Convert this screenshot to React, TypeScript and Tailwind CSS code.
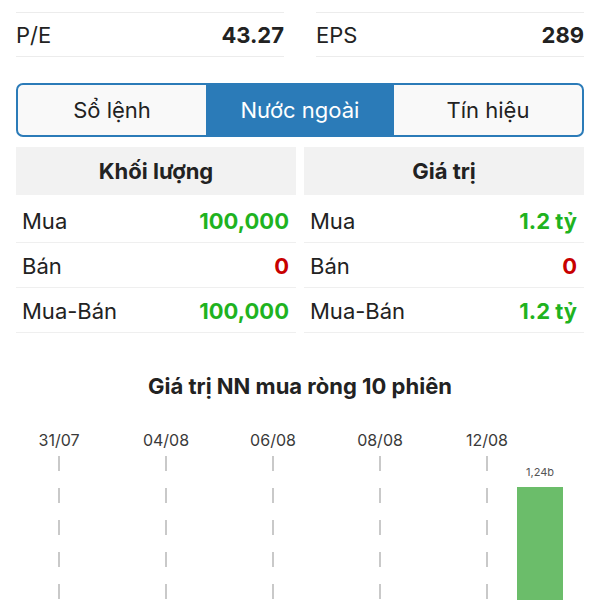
import React from "react";

const font = { fontFamily: "Inter, 'Liberation Sans', sans-serif" };

const stats = [
  { label: "P/E", value: "43.27" },
  { label: "EPS", value: "289" },
];

const tabs = ["Sổ lệnh", "Nước ngoài", "Tín hiệu"];

const tables = [
  {
    title: "Khối lượng",
    rows: [
      { label: "Mua", value: "100,000", tone: "up" },
      { label: "Bán", value: "0", tone: "down" },
      { label: "Mua-Bán", value: "100,000", tone: "up" },
    ],
  },
  {
    title: "Giá trị",
    rows: [
      { label: "Mua", value: "1.2 tỷ", tone: "up" },
      { label: "Bán", value: "0", tone: "down" },
      { label: "Mua-Bán", value: "1.2 tỷ", tone: "up" },
    ],
  },
];

const dates = ["31/07", "04/08", "06/08", "08/08", "12/08"];

function FlowChart() {
  return (
    <svg width="600" height="190" viewBox="0 0 600 190" className="block">
      {dates.map((d, i) => {
        const x = 59 + i * 107;
        return (
          <g key={d}>
            <text
              x={x}
              y={22}
              textAnchor="middle"
              fontSize="16"
              fill="#3a3a3a"
              fontFamily="Inter, 'Liberation Sans', sans-serif"
            >
              {d}
            </text>
            <line
              x1={x}
              x2={x}
              y1={32}
              y2={190}
              stroke="#c9c9c9"
              strokeWidth="2"
              strokeDasharray="15 17"
            />
          </g>
        );
      })}
      <text
        x={540}
        y={52}
        textAnchor="middle"
        fontSize="11"
        fill="#555"
        fontFamily="Inter, 'Liberation Sans', sans-serif"
      >
        1,24b
      </text>
      <rect x={517} y={63} width={46} height={127} fill="#6bbd6a" />
    </svg>
  );
}

export default function App() {
  return (
    <div className="h-[600px] w-[600px] overflow-hidden bg-white text-[#222]" style={font}>
      {/* previous stats row, cut off by the top edge */}
      <div className="grid grid-cols-2 gap-8 px-4">
        <div className="h-[13px] border-b border-[#ececec]" />
        <div className="h-[13px] border-b border-[#ececec]" />
      </div>
      <div className="grid grid-cols-2 gap-8 px-4">
        {stats.map((s) => (
          <div
            key={s.label}
            className="flex h-[44px] items-center justify-between border-b border-[#ececec] pt-[2px] text-[22px]"
          >
            <span>{s.label}</span>
            <span className="font-bold">{s.value}</span>
          </div>
        ))}
      </div>

      <div className="mx-4 mt-[26px] grid h-[54px] grid-cols-3 overflow-hidden rounded-[7px] border-2 border-[#2b7bb8] bg-[#f9f9f9] text-[22px]">
        {tabs.map((t, i) => (
          <div
            key={t}
            className={
              i === 1
                ? "flex items-center justify-center bg-[#2b7bb8] text-white"
                : "flex items-center justify-center text-[#222]"
            }
          >
            {t}
          </div>
        ))}
      </div>

      <div className="mt-[10px] grid grid-cols-2 gap-2 px-4">
        {tables.map((tb) => (
          <div key={tb.title}>
            <div className="flex h-[48px] items-center justify-center bg-[#f2f2f2] text-[22px] font-bold">
              {tb.title}
            </div>
            {tb.rows.map((r, i) => (
              <div
                key={r.label}
                className={
                  (i === 0 ? "h-[48px] pt-[6px] " : "h-[45px] pt-[2px] ") +
                  "flex items-center justify-between border-b border-[#efefef] pl-[6px] pr-[7px] text-[22px]"
                }
              >
                <span>{r.label}</span>
                <span
                  className={
                    r.tone === "up" ? "font-bold text-[#1fb31f]" : "font-bold text-[#c80000]"
                  }
                >
                  {r.value}
                </span>
              </div>
            ))}
          </div>
        ))}
      </div>

      <div className="mt-[37px] text-center text-[22px] font-bold">Giá trị NN mua ròng 10 phiên</div>

      <div className="mt-[21px]">
        <FlowChart />
      </div>
    </div>
  );
}
